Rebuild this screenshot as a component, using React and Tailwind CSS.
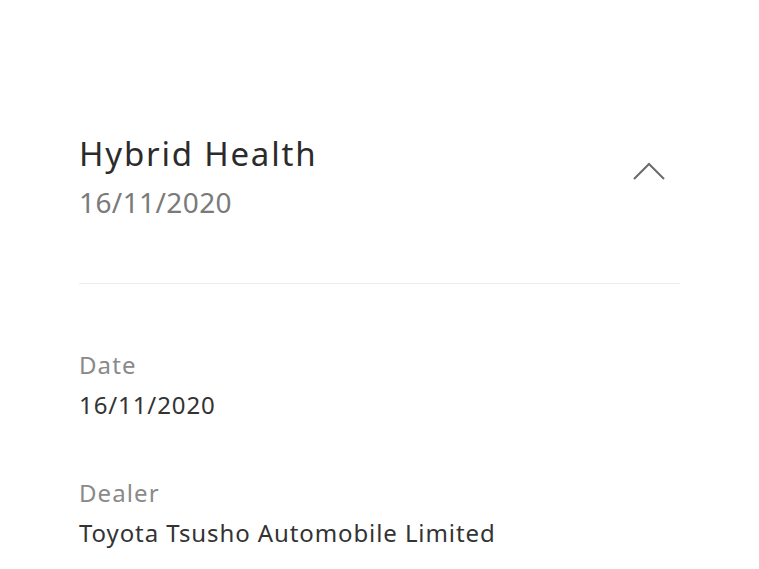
import React from 'react';

function Field({ label, value, className }) {
  return (
    <div className={className}>
      <div className="text-[24px] leading-[28px] tracking-[1.1px] text-[#8a8a8a]">{label}</div>
      <div className="mt-[12px] text-[24px] leading-[28px] tracking-[0.9px] text-[#333333]">{value}</div>
    </div>
  );
}

export default function App() {
  return (
    <div
      className="min-h-[569px] w-full bg-white"
      style={{ fontFamily: '"Noto Sans", "Open Sans", sans-serif' }}
    >
      <div className="mx-auto w-[601px] pt-[134px]">
        {/* header */}
        <div className="flex items-start justify-between">
          <div>
            <h1 className="text-[33px] leading-[40px] tracking-[1.8px] text-[#2b2b2b]">Hybrid Health</h1>
            <div className="mt-[10px] text-[28px] leading-[36px] tracking-[0.4px] text-[#7a7a7a]">16/11/2020</div>
          </div>
          <svg
            className="mr-[15px] mt-[28px]"
            width="32"
            height="18"
            viewBox="0 0 32 18"
            fill="none"
            stroke="#6b6b6b"
            strokeWidth="2"
          >
            <path d="M1 17 L16 2 L31 17" />
          </svg>
        </div>

        <div className="mt-[63px] h-px bg-[#ececec]" />

        <Field label="Date" value="16/11/2020" className="mt-[67px]" />
        <Field label="Dealer" value="Toyota Tsusho Automobile Limited" className="mt-[60px]" />
      </div>
    </div>
  );
}
